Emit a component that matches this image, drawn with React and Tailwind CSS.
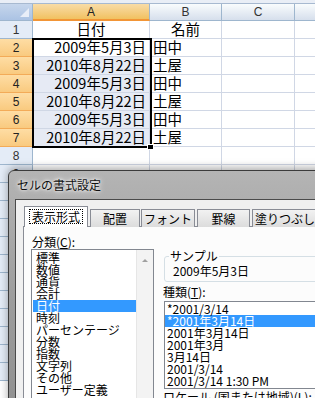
import React from "react";

const ROWS = [
  { n: 1, a: "日付", b: "名前", title: true },
  { n: 2, a: "2009年5月3日", b: "田中" },
  { n: 3, a: "2010年8月22日", b: "土屋" },
  { n: 4, a: "2009年5月3日", b: "田中" },
  { n: 5, a: "2010年8月22日", b: "土屋" },
  { n: 6, a: "2009年5月3日", b: "田中" },
  { n: 7, a: "2010年8月22日", b: "土屋" },
  { n: 8 }, { n: 9 }, { n: 10 }, { n: 11 }, { n: 12 }, { n: 13 },
  { n: 14 }, { n: 15 }, { n: 16 }, { n: 17 }, { n: 18 }, { n: 19 }, { n: 20 },
];

const CATEGORIES = [
  "標準", "数値", "通貨", "会計", "日付", "時刻", "パーセンテージ",
  "分数", "指数", "文字列", "その他", "ユーザー定義",
];

const TYPES = [
  "*2001/3/14", "*2001年3月14日", "2001年3月14日", "2001年3月",
  "3月14日", "2001/3/14", "2001/3/14 1:30 PM",
];

const TABS = [
  { label: "配置", cls: "ml-[2px] w-[50px]" },
  { label: "フォント", cls: "ml-[1px] w-[54px]" },
  { label: "罫線", cls: "ml-[2px] w-[53px]" },
  { label: "塗りつぶし", cls: "ml-[2px] w-[66px]" },
];

function ColHeader({ label, width, active }) {
  return (
    <div
      className={`${width} h-full flex items-center justify-center border-r text-[12px] font-['Liberation_Sans',sans-serif] ${
        active
          ? "bg-gradient-to-b from-[#f9dca6] to-[#f1c15f] border-b-[2px] border-b-[#f29536] border-r-[#9eb6ce] text-[#222]"
          : "bg-gradient-to-b from-[#f9fcfd] to-[#d6dfec] border-b border-b-[#9eb6ce] border-r-[#9eb6ce] text-[#333]"
      }`}
    >
      {label}
    </div>
  );
}

function SheetRow({ row }) {
  const selected = row.n >= 2 && row.n <= 7;
  return (
    <div className="flex h-[18px]">
      <div
        className={`w-[33px] shrink-0 flex items-center justify-center text-[12px] font-['Liberation_Sans',sans-serif] border-b border-r ${
          selected
            ? "bg-gradient-to-b from-[#fedda4] to-[#f9ca7f] border-b-[#f3ab58] border-r-[#f29536] text-[#222]"
            : "bg-[#e4ecf7] border-b-[#9eb6ce] border-r-[#9eb6ce] text-[#333]"
        }`}
      >
        {row.n}
      </div>
      <div
        className={`w-[117px] shrink-0 flex items-center border-r border-b border-[#d0d7e5] text-[14.5px] leading-none text-black ${
          row.title ? "justify-center" : "justify-end pr-[3px]"
        } ${selected && row.n !== 2 ? "bg-[#e6eaf4]" : "bg-white"}`}
      >
        {row.a}
      </div>
      <div
        className={`w-[72px] shrink-0 flex items-center border-r border-b border-[#d0d7e5] text-[14.5px] leading-none text-black ${
          row.title ? "justify-center" : "pl-[3px]"
        }`}
      >
        {row.b}
      </div>
      <div className="w-[73px] shrink-0 border-r border-b border-[#d0d7e5]" />
      <div className="flex-1 border-b border-[#d0d7e5]" />
    </div>
  );
}

export default function App() {
  return (
    <div className="relative w-[315px] h-[398px] overflow-hidden bg-white font-['Noto_Sans_CJK_JP',sans-serif]">
      {/* sheet */}
      <div className="h-[4px] bg-[#e9eef6] border-b border-[#a7b9d0]" />
      <div className="flex h-[17px]">
        <div className="w-[33px] shrink-0 relative bg-gradient-to-b from-[#c6d6ec] to-[#abc3e4] border-r border-b border-[#9eb6ce]">
          <div className="absolute right-[3px] bottom-[3px] w-0 h-0 border-l-[9px] border-l-transparent border-b-[9px] border-b-[#e8eef8]" />
        </div>
        <ColHeader label="A" width="w-[117px]" active />
        <ColHeader label="B" width="w-[72px]" />
        <ColHeader label="C" width="w-[73px]" />
        <div className="flex-1 bg-gradient-to-b from-[#f9fcfd] to-[#d6dfec] border-b border-[#9eb6ce]" />
      </div>
      {ROWS.map((r) => (
        <SheetRow key={r.n} row={r} />
      ))}

      {/* selection */}
      <div className="absolute left-[32px] top-[38px] w-[120px] h-[110px] border-[2px] border-black" />
      <div className="absolute left-[147px] top-[144px] w-[7px] h-[6px] bg-black border border-white" />

      {/* dialog */}
      <div className="absolute left-[8px] top-[170px] w-[350px] h-[260px] rounded-tl-[6px] border border-[#3b3b3b] bg-gradient-to-b from-[#b4b4b4] via-[#9c9c9c] to-[#8e8e8e] shadow-[0_-2px_8px_rgba(0,0,0,0.35)] flex flex-col">
        <div className="h-[28px] shrink-0 flex items-center pl-[8px] text-[12px] text-[#111] [text-shadow:0_0_6px_#fff,0_0_3px_#fff]">
          セルの書式設定
        </div>
        <div className="ml-[6px] flex-1 bg-[#f0f0f0] border-t border-l border-[#4a4a4a] pt-[6px] pl-[7px] flex flex-col text-[12px] text-black">
          {/* tabs */}
          <div className="flex items-end h-[21px] relative z-10 whitespace-nowrap">
            <div className="ml-[1px] w-[64px] h-[21px] shrink-0 bg-white border border-b-0 border-[#898c95] flex items-center justify-center pb-[1px]">
              <span className="border border-dotted border-black px-[2px] leading-[13px]">表示形式</span>
            </div>
            {TABS.map((t) => (
              <div
                key={t.label}
                className={`${t.cls} h-[18px] shrink-0 bg-gradient-to-b from-[#f2f2f2] to-[#dcdcdc] border border-b-0 border-[#898c95] flex items-center justify-center`}
              >
                {t.label}
              </div>
            ))}
          </div>
          {/* panel */}
          <div className="-mt-[1px] flex-1 bg-[#fcfcfc] border border-[#898c95] flex pl-[7px] pt-[9px] gap-[9px]">
            <div className="w-[123px] shrink-0 flex flex-col">
              <div className="leading-[12px] h-[12px] ml-[1px]">
                分類(<span className="underline">C</span>):
              </div>
              <div className="mt-[1px] border border-[#828790] bg-white flex h-[160px]">
                <div className="flex-1 pt-[2px] pl-[1px]">
                  {CATEGORIES.map((c) => (
                    <div
                      key={c}
                      className={`h-[12px] leading-[12px] pl-[3px] ${c === "日付" ? "bg-[#3399ff] text-white" : ""}`}
                    >
                      {c}
                    </div>
                  ))}
                </div>
                <div className="w-[17px] shrink-0 bg-[#f3f3f3] border-l border-[#e6e6e6] flex justify-center pt-[9px]">
                  <div className="w-0 h-0 border-l-[3px] border-r-[3px] border-b-[3px] border-l-transparent border-r-transparent border-b-[#a0a0a0]" />
                </div>
              </div>
            </div>
            <div className="flex-1 flex flex-col pt-[14px]">
              <fieldset className="border border-[#d5dfe5] rounded-[3px] pl-[8px] pb-[4px] pt-[3px] ml-[1px]">
                <legend className="px-[1px] leading-[12px] -ml-[4px]">サンプル</legend>
                <div className="leading-[12px]">2009年5月3日</div>
              </fieldset>
              <div className="mt-[4px] leading-[12px] h-[12px]">
                種類(<span className="underline">T</span>):
              </div>
              <div className="mt-[3px] ml-[1px] border border-[#828790] bg-white pt-[1px] pb-[1px]">
                {TYPES.map((t, i) => (
                  <div
                    key={i}
                    className={`h-[12px] leading-[12px] pl-[2px] ${i === 1 ? "bg-[#3399ff] text-white" : ""}`}
                  >
                    {t}
                  </div>
                ))}
              </div>
              <div className="mt-[2px] leading-[12px]">ロケール (国または地域)(L):</div>
            </div>
          </div>
        </div>
      </div>
    </div>
  );
}
